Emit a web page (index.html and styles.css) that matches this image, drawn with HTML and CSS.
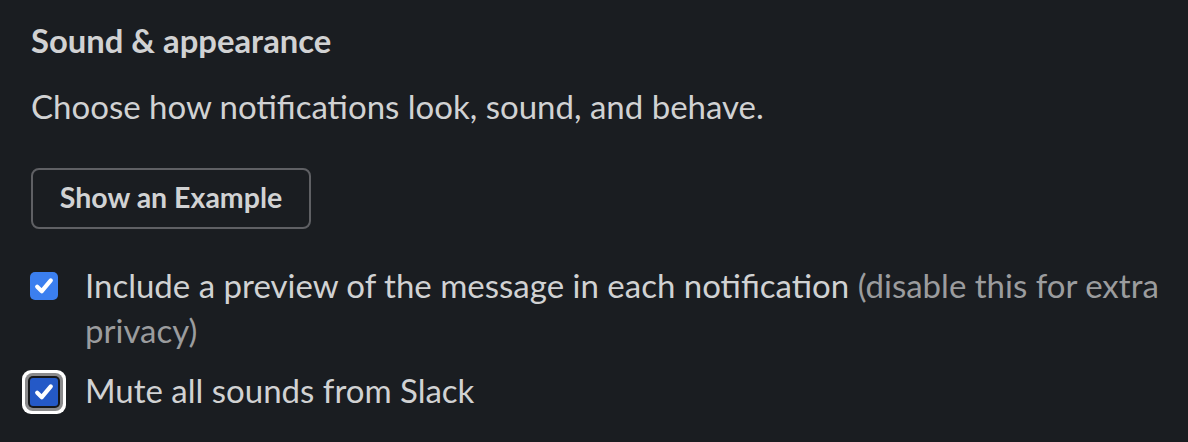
FILE: index.html
```html
<!DOCTYPE html>
<html>
<head>
<meta charset="utf-8">
<link rel="stylesheet" href="styles.css">
</head>
<body>
<div class="section">
  <h2 class="title">Sound &amp; appearance</h2>
  <p class="desc">Choose how notifications look, sound, and behave.</p>
  <button class="btn">Show an Example</button>
  <div class="options">
    <label class="opt">
      <span class="box">
        <svg viewBox="0 0 28 28" width="28" height="28"><path d="M7.2 14.8 L11.8 19.2 L20.8 8.4" fill="none" stroke="#fff" stroke-width="4.2" stroke-linecap="round" stroke-linejoin="round"/></svg>
      </span>
      <span class="text">Include a preview of the message in each notification <span class="muted">(disable this for extra privacy)</span></span>
    </label>
    <label class="opt">
      <span class="box focus">
        <svg viewBox="0 0 28 28" width="28" height="28"><path d="M7.2 14.8 L11.8 19.2 L20.8 8.4" fill="none" stroke="#fff" stroke-width="4.2" stroke-linecap="round" stroke-linejoin="round"/></svg>
      </span>
      <span class="text">Mute all sounds from Slack</span>
    </label>
  </div>
</div>
</body>
</html>
```
FILE: styles.css
```css
html, body {
  margin: 0;
  padding: 0;
  background: #1a1d21;
}
body {
  font-family: Lato, "Noto Sans", sans-serif;
  color: #d1d2d3;
  width: 1188px;
  height: 442px;
  overflow: hidden;
}
.section {
  padding: 18px 0 0 30px;
}
.title {
  margin: 0 0 0 1px;
  font-size: 32.8px;
  font-weight: 700;
  line-height: 45px;
}
.desc {
  margin: 21px 0 0 1px;
  font-size: 33px;
  line-height: 45px;
}
.btn {
  display: block;
  margin: 39px 0 0 1px;
  height: 61px;
  width: 280px;
  padding: 0 0 4px 0;
  background: transparent;
  border: 2px solid #5f6064;
  border-radius: 8px;
  color: #d1d2d3;
  font-family: Lato, "Noto Sans", sans-serif;
  font-size: 28.5px;
  font-weight: 700;
}
.options {
  margin-top: 34px;
  display: flex;
  flex-direction: column;
  gap: 15px;
}
.opt {
  display: flex;
  align-items: flex-start;
  gap: 27px;
  padding-right: 20px;
}
.box {
  flex: none;
  width: 28px;
  height: 28px;
  margin-top: 9px;
  border-radius: 5px;
  background: #3b7fef;
  display: flex;
  align-items: center;
  justify-content: center;
}
.box.focus {
  margin-top: 10px;
  background: #2459c7;
  box-shadow: 0 0 0 2px #16181b, 0 0 0 5px #8a8a8c, 0 0 0 8px #ffffff;
  border-radius: 3px;
}
.text {
  font-size: 33px;
  line-height: 45px;
}
.muted {
  color: #9b9c9e;
}
```
